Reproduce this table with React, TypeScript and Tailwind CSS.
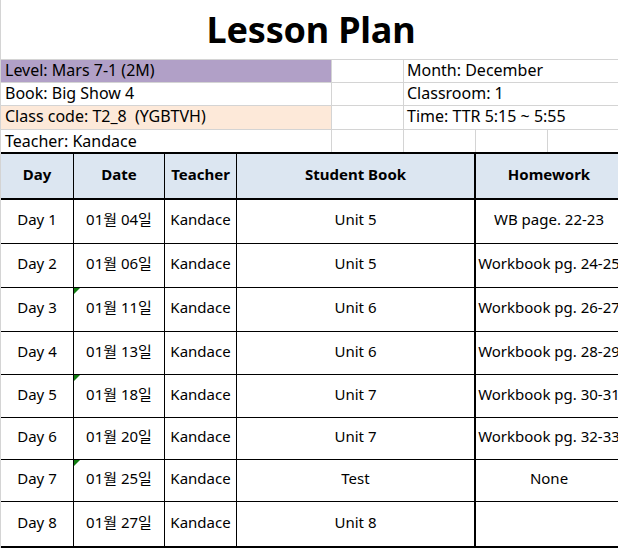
const info = [
  { left: 'Level: Mars 7-1 (2M)', leftBg: 'bg-[#b1a0c7]', right: 'Month: December', h: 'h-[23px]' },
  { left: 'Book: Big Show 4', leftBg: 'bg-white', right: 'Classroom: 1', h: 'h-[23px]' },
  { left: 'Class code: T2_8  (YGBTVH)', leftBg: 'bg-[#fde9d9]', right: 'Time: TTR 5:15 ~ 5:55', h: 'h-[24px]' },
]

const lessons = [
  { day: 'Day 1', date: '01월 04일', book: 'Unit 5', hw: 'WB page. 22-23', h: 'h-[44px]', flag: false },
  { day: 'Day 2', date: '01월 06일', book: 'Unit 5', hw: 'Workbook pg. 24-25', h: 'h-[44px]', flag: false },
  { day: 'Day 3', date: '01월 11일', book: 'Unit 6', hw: 'Workbook pg. 26-27', h: 'h-[44px]', flag: true },
  { day: 'Day 4', date: '01월 13일', book: 'Unit 6', hw: 'Workbook pg. 28-29', h: 'h-[43px]', flag: false },
  { day: 'Day 5', date: '01월 18일', book: 'Unit 7', hw: 'Workbook pg. 30-31', h: 'h-[43px]', flag: true },
  { day: 'Day 6', date: '01월 20일', book: 'Unit 7', hw: 'Workbook pg. 32-33', h: 'h-[42px]', flag: false },
  { day: 'Day 7', date: '01월 25일', book: 'Test', hw: 'None', h: 'h-[42px]', flag: true },
  { day: 'Day 8', date: '01월 27일', book: 'Unit 8', hw: '', h: 'h-[44px]', flag: false },
]

const cols = 'grid grid-cols-[73px_91px_72px_239px_146px]'
const cell = 'flex items-center justify-center pb-[4px]'

export default function App() {
  return (
    <div
      className="w-[618px] h-[549px] overflow-hidden bg-white text-black text-[15px] leading-none"
      style={{ fontFamily: '"Noto Sans", "Noto Sans CJK KR", sans-serif' }}
    >
      <div className="w-[621px] border-l border-[#d4d4d4]">
        {/* title */}
        <div className="h-[59px] flex items-center justify-center">
          <h1 className="text-[36px] font-bold tracking-[-0.2px]">Lesson Plan</h1>
        </div>

        {/* info block */}
        <div className="border-t border-[#d4d4d4] text-[16px]">
          {info.map((row) => (
            <div key={row.left} className={`flex ${row.h} border-b border-[#d4d4d4]`}>
              <div className={`w-[331px] ${row.leftBg} border-r border-[#d4d4d4] flex items-center pl-[4px] pb-[3px] whitespace-pre`}>
                {row.left}
              </div>
              <div className="w-[72px] border-r border-[#d4d4d4]" />
              <div className="flex-1 flex items-center pl-[3px] pb-[3px] whitespace-pre">{row.right}</div>
            </div>
          ))}
          <div className="flex h-[22px]">
            <div className="w-[331px] border-r border-[#d4d4d4] flex items-center pl-[4px] pb-[1px]">Teacher: Kandace</div>
            <div className="w-[72px] border-r border-[#d4d4d4]" />
            <div className="w-[72px] border-r border-[#d4d4d4]" />
            <div className="w-[72px] border-r border-[#d4d4d4]" />
            <div className="flex-1" />
          </div>
        </div>

        {/* schedule table */}
        <div className="border-t-2 border-b-2 border-black">
          <div className={`${cols} h-[46px] bg-[#dce6f1] border-b-2 border-black font-bold`}>
            <div className={`border-r border-black ${cell}`}>Day</div>
            <div className={`border-r border-black ${cell}`}>Date</div>
            <div className={`border-r border-black ${cell}`}>Teacher</div>
            <div className={`border-r-2 border-black ${cell}`}>Student Book</div>
            <div className={cell}>Homework</div>
          </div>
          {lessons.map((l, i) => (
            <div
              key={l.day}
              className={`${cols} ${l.h} ${i < lessons.length - 1 ? 'border-b border-black' : ''}`}
            >
              <div className={`border-r border-black ${cell}`}>{l.day}</div>
              <div className={`relative border-r border-black ${cell}`}>
                {l.flag && (
                  <span className="absolute left-0 top-0 w-0 h-0 border-t-[6px] border-r-[6px] border-t-[#107c10] border-r-transparent" />
                )}
                {l.date}
              </div>
              <div className={`border-r border-black ${cell}`}>Kandace</div>
              <div className={`border-r-2 border-black ${cell}`}>{l.book}</div>
              <div className={`${cell} whitespace-nowrap`}>{l.hw}</div>
            </div>
          ))}
        </div>
      </div>
    </div>
  )
}
